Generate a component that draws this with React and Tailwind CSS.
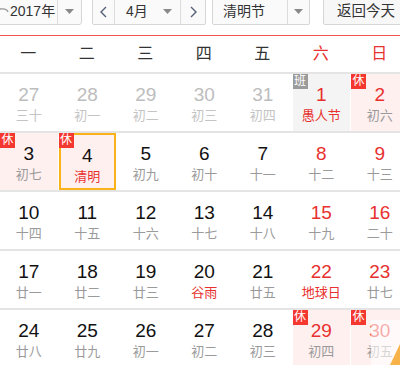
import React from "react";

const RED = "text-[#e8312f]";

const rows = [
  [
    { d: "27", l: "三十", prev: true },
    { d: "28", l: "初一", prev: true },
    { d: "29", l: "初二", prev: true },
    { d: "30", l: "初三", prev: true },
    { d: "31", l: "初四", prev: true },
    { d: "1", l: "愚人节", redD: true, redL: true, work: true },
    { d: "2", l: "初六", redD: true, rest: true },
  ],
  [
    { d: "3", l: "初七", rest: true },
    { d: "4", l: "清明", redL: true, rest: true, today: true },
    { d: "5", l: "初九" },
    { d: "6", l: "初十" },
    { d: "7", l: "十一" },
    { d: "8", l: "十二", redD: true },
    { d: "9", l: "十三", redD: true },
  ],
  [
    { d: "10", l: "十四" },
    { d: "11", l: "十五" },
    { d: "12", l: "十六" },
    { d: "13", l: "十七" },
    { d: "14", l: "十八" },
    { d: "15", l: "十九", redD: true },
    { d: "16", l: "二十", redD: true },
  ],
  [
    { d: "17", l: "廿一" },
    { d: "18", l: "廿二" },
    { d: "19", l: "廿三" },
    { d: "20", l: "谷雨", redL: true },
    { d: "21", l: "廿五" },
    { d: "22", l: "地球日", redD: true, redL: true },
    { d: "23", l: "廿七", redD: true },
  ],
  [
    { d: "24", l: "廿八" },
    { d: "25", l: "廿九" },
    { d: "26", l: "初一" },
    { d: "27", l: "初二" },
    { d: "28", l: "初三" },
    { d: "29", l: "初四", redD: true, rest: true },
    { d: "30", l: "初五", redD: true, rest: true },
  ],
];

const weeks = ["一", "二", "三", "四", "五", "六", "日"];

function Caret() {
  return (
    <svg width="9" height="5" viewBox="0 0 9 5">
      <path d="M0 0 L9 0 L4.5 5 Z" fill="#8a8a8a" />
    </svg>
  );
}

function Chevron({ dir }) {
  return (
    <svg width="7" height="12" viewBox="0 0 7 12">
      <path
        d={dir === "left" ? "M6 1 L1 6 L6 11" : "M1 1 L6 6 L1 11"}
        fill="none"
        stroke="#56607a"
        strokeWidth="1.4"
      />
    </svg>
  );
}

function Cell({ c }) {
  let bg = "";
  if (c.rest) bg = "bg-[#fff0f0]";
  if (c.work) bg = "bg-[#f4f4f4]";
  const dColor = c.prev ? "text-[#bdbdbd]" : c.redD ? RED : "text-[#111]";
  const lColor = c.prev ? "text-[#c4c4c4]" : c.redL ? RED : "text-[#9a9a9a]";
  return (
    <div className="relative h-[57px]">
      <div
        className={`ml-[1px] h-full flex flex-col items-center pt-[10px] box-border ${bg} ${
          c.today ? "border-2 border-[#f9b21a] pt-[8px]" : ""
        }`}
      >
        <div className={`text-[19px] leading-[22px] ${dColor}`}>{c.d}</div>
        <div className={`text-[13px] leading-[17px] mt-[1px] ${lColor}`}>{c.l}</div>
      </div>
      {c.rest && (
        <div className="absolute top-0 left-[1px] w-[15px] h-[15px] bg-[#f5382f] text-white text-[12px] leading-[15px] text-center">
          休
        </div>
      )}
      {c.work && (
        <div className="absolute top-0 left-[1px] w-[15px] h-[15px] bg-[#9b9b9b] text-white text-[12px] leading-[15px] text-center">
          班
        </div>
      )}
    </div>
  );
}

export default function App() {
  return (
    <div className="relative w-[407px] h-[365px] overflow-hidden bg-white font-['Liberation_Sans','Noto_Sans_CJK_SC',sans-serif]">
      <div className="w-[400px] overflow-hidden">
        {/* top bar */}
        <div className="relative h-[35px] flex items-start">
          <div className="flex shrink-0 h-[27px] mt-[-2px] ml-[-8px] w-[90px] border border-[#d6d6d6] rounded-[3px] bg-[#fafafa] text-[14px] text-[#333]">
            <div className="w-[65px] pl-[17px] flex items-center border-r border-[#dcdcdc]">2017年</div>
            <div className="flex-1 flex items-center justify-center">
              <Caret />
            </div>
          </div>
          <div className="flex shrink-0 h-[27px] mt-[-2px] ml-[10px] w-[114px] border border-[#d6d6d6] rounded-[2px] bg-[#fafafa] text-[14px] text-[#333]">
            <div className="w-[22px] flex items-center justify-center border-r border-[#dcdcdc]">
              <Chevron dir="left" />
            </div>
            <div className="w-[66px] flex items-center pl-[11px] border-r border-[#dcdcdc]">
              <span>4月</span>
              <span className="ml-[15px] flex">
                <Caret />
              </span>
            </div>
            <div className="flex-1 flex items-center justify-center">
              <Chevron dir="right" />
            </div>
          </div>
          <div className="flex shrink-0 h-[27px] mt-[-2px] ml-[6px] w-[98px] border border-[#d6d6d6] rounded-[2px] bg-[#fafafa] text-[14px] text-[#333]">
            <div className="w-[75px] pl-[10px] flex items-center border-r border-[#dcdcdc]">清明节</div>
            <div className="flex-1 flex items-center justify-center">
              <Caret />
            </div>
          </div>
          <div className="flex shrink-0 h-[27px] mt-[-2px] ml-[13px] w-[95px] border border-[#d6d6d6] rounded-[2px] bg-[#f7f7f7] text-[14.5px] text-[#333] items-center pl-[13px]">
            返回今天
          </div>
          <svg className="absolute left-0 top-[6px]" width="10" height="8" viewBox="0 0 10 8">
            <path d="M0 3 Q7 2 8 6" fill="none" stroke="#9a9a9a" strokeWidth="1.3" />
          </svg>
        </div>
        <div className="h-[1px] bg-[#f0534e]" />
        {/* week header */}
        <div className="ml-[-1px] w-[409.5px] grid grid-cols-[repeat(7,58.5px)] h-[36px] items-center text-[16px]">
          {weeks.map((w, i) => (
            <div key={w} className={`text-center ${i >= 5 ? RED : "text-[#333]"}`}>
              {w}
            </div>
          ))}
        </div>
        {/* body */}
        {rows.map((r, ri) => (
          <div key={ri} className="border-t-2 border-[#e4e4e4]">
            <div className="ml-[-1px] w-[409.5px] grid grid-cols-[repeat(7,58.5px)]">
              {r.map((c, ci) => (
                <Cell key={ci} c={c} />
              ))}
            </div>
          </div>
        ))}
      </div>
      <div className="absolute left-[371px] top-[320px] w-[29px] h-[45px] bg-white/60" />
      <svg className="absolute left-[390px] top-[340px]" width="10" height="25" viewBox="0 0 10 25">
        <path d="M0 25 L10 4 L10 25 Z" fill="#f7b24a" />
      </svg>
    </div>
  );
}
